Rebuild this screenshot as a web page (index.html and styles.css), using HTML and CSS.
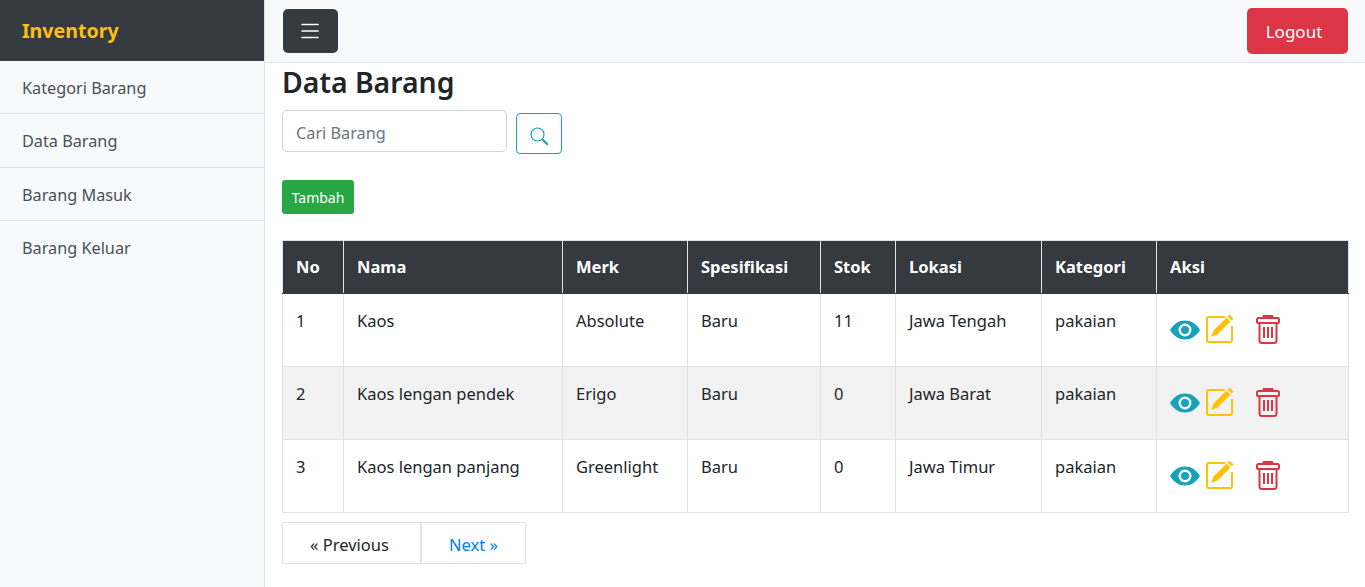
FILE: index.html
```html
<!DOCTYPE html>
<html lang="id">
<head>
  <meta charset="UTF-8" />
  <meta name="viewport" content="width=device-width, initial-scale=1.0" />
  <title>Inventory</title>
  <link rel="stylesheet" href="styles.css">
</head>
<body>
  <svg class="icon-defs" width="0" height="0">
    <symbol id="i-eye" viewBox="0 0 30 20">
      <path fill-rule="evenodd" d="M0 10C4 3.500 9 .5 15 .5S26 3.500 30 10c-4 6.500-9 9.500-15 9.500S4 16.500 0 10zm15-6.500a6.500 6.500 0 1 0 0 13 6.500 6.500 0 0 0 0-13zm0 2.500a4 4 0 1 1 0 8 4 4 0 0 1 0-8z"/>
    </symbol>
    <symbol id="i-edit" viewBox="0 0 28 29">
      <path fill="none" stroke="currentColor" stroke-width="2" d="M19 3H3a2 2 0 0 0-2 2v21a2 2 0 0 0 2 2h21a2 2 0 0 0 2-2V12"/>
      <path d="M23.500 .5l4 4-2 2-4-4zM20.500 3.500l4 4L11.500 20.500l-6.500 2.500 2.500-6.500z"/>
    </symbol>
    <symbol id="i-trash" viewBox="0 0 24 29">
      <path d="M8.500 0h7a1.500 1.500 0 0 1 1.500 2.500H7A1.500 1.500 0 0 1 8.500 0z"/>
      <path fill="none" stroke="currentColor" stroke-width="2" d="M2.500 3h19a1.500 1.500 0 0 1 1.500 1.500V7a1 1 0 0 1-1 1H2a1 1 0 0 1-1-1V4.500A1.500 1.500 0 0 1 2.500 3zM3.500 8v17.500A2.500 2.500 0 0 0 6 28h12a2.500 2.500 0 0 0 2.500-2.500V8"/>
      <path fill="none" stroke="currentColor" stroke-width="2" d="M8 12v11M12 12v11M16 12v11"/>
    </symbol>
  </svg>

  <div class="wrapper">
    <nav class="sidebar">
      <div class="brand">Inventory</div>
      <a class="side-link" href="#">Kategori Barang</a>
      <a class="side-link" href="#">Data Barang</a>
      <a class="side-link" href="#">Barang Masuk</a>
      <a class="side-link last" href="#">Barang Keluar</a>
    </nav>

    <div class="content">
      <header class="topbar">
        <button class="btn-toggle" aria-label="Menu">
          <svg width="18" height="16" viewBox="0 0 18 16"><path d="M1 1.500h16M1 8h16M1 14.500h16" stroke="#fff" stroke-width="1.600" stroke-linecap="round"/></svg>
        </button>
        <button class="btn-logout">Logout</button>
      </header>

      <main class="main">
        <h1>Data Barang</h1>
        <form class="search-form">
          <input class="search-input" type="text" placeholder="Cari Barang" />
          <button type="button" class="btn-search" aria-label="Cari">
            <svg width="20" height="20" viewBox="0 0 20 20"><circle cx="8.500" cy="8.500" r="6.500" fill="none" stroke="#17a2b8" stroke-width="1.200"/><path d="M13.300 13.300l5 5" stroke="#17a2b8" stroke-width="2" stroke-linecap="round"/></svg>
          </button>
        </form>
        <button class="btn-add">Tambah</button>

        <table class="data-table">
          <colgroup>
            <col class="c-no"><col class="c-nama"><col class="c-merk"><col class="c-spek">
            <col class="c-stok"><col class="c-lokasi"><col class="c-kat"><col>
          </colgroup>
          <thead>
            <tr><th>No</th><th>Nama</th><th>Merk</th><th>Spesifikasi</th><th>Stok</th><th>Lokasi</th><th>Kategori</th><th>Aksi</th></tr>
          </thead>
          <tbody>
            <tr>
              <td>1</td><td>Kaos</td><td>Absolute</td><td>Baru</td><td>11</td><td>Jawa Tengah</td><td>pakaian</td>
              <td><div class="aksi">
                <svg class="ic-eye"><use href="#i-eye"/></svg>
                <svg class="ic-edit"><use href="#i-edit"/></svg>
                <svg class="ic-trash"><use href="#i-trash"/></svg>
              </div></td>
            </tr>
            <tr>
              <td>2</td><td>Kaos lengan pendek</td><td>Erigo</td><td>Baru</td><td>0</td><td>Jawa Barat</td><td>pakaian</td>
              <td><div class="aksi">
                <svg class="ic-eye"><use href="#i-eye"/></svg>
                <svg class="ic-edit"><use href="#i-edit"/></svg>
                <svg class="ic-trash"><use href="#i-trash"/></svg>
              </div></td>
            </tr>
            <tr>
              <td>3</td><td>Kaos lengan panjang</td><td>Greenlight</td><td>Baru</td><td>0</td><td>Jawa Timur</td><td>pakaian</td>
              <td><div class="aksi">
                <svg class="ic-eye"><use href="#i-eye"/></svg>
                <svg class="ic-edit"><use href="#i-edit"/></svg>
                <svg class="ic-trash"><use href="#i-trash"/></svg>
              </div></td>
            </tr>
          </tbody>
        </table>

        <div class="pager">
          <a class="page-prev" href="#">« Previous</a>
          <a class="page-next" href="#">Next »</a>
        </div>
      </main>
    </div>
  </div>
</body>
</html>
```

FILE: styles.css
```css
html, body {
  height: 100%;
}
body {
  margin: 0;
  font-family: "Noto Sans", "Open Sans", sans-serif;
  font-size: 16.500px;
  color: #212529;
  background: #fff;
  overflow: hidden;
}
.icon-defs {
  display: none;
}
.wrapper {
  display: flex;
  height: 100%;
}

/* sidebar */
.sidebar {
  width: 264px;
  flex-shrink: 0;
  background: #f8f9fa;
  border-right: 1px solid #dee2e6;
}
.brand {
  height: 61px;
  padding-left: 22px;
  background: #343a40;
  color: #ffc107;
  font-size: 19.600px;
  font-weight: 700;
  line-height: 61px;
}
.side-link {
  display: block;
  height: 52.400px;
  padding-left: 22px;
  border-bottom: 1px solid #dee2e6;
  color: #495057;
  font-size: 16.250px;
  line-height: 54px;
  text-decoration: none;
}
.side-link.last {
  border-bottom: none;
}

/* top bar */
.content {
  flex: 1;
  min-width: 0;
}
.topbar {
  display: flex;
  justify-content: space-between;
  align-items: center;
  height: 62px;
  padding: 0 17px 0 18px;
  background: #f8f9fa;
  border-bottom: 1px solid #dee2e6;
}
.btn-toggle {
  display: flex;
  align-items: center;
  justify-content: center;
  width: 55px;
  height: 44px;
  padding: 0 1px 0 0;
  border: none;
  border-radius: 5px;
  background: #343a40;
}
.btn-logout {
  width: 101px;
  height: 46px;
  padding: 0 7px 0 0;
  border: none;
  border-radius: 5px;
  background: #dc3545;
  color: #fff;
  font: inherit;
  font-size: 17px;
}

/* main */
.main {
  padding: 0 16px 0 17px;
}
h1 {
  margin: 0;
  height: 47px;
  font-size: 28.400px;
  font-weight: 600;
  line-height: 38px;
}
.search-form {
  display: flex;
  align-items: flex-start;
  gap: 9px;
}
.search-input {
  box-sizing: border-box;
  width: 225px;
  height: 42px;
  padding: 4px 13px 0;
  border: 1px solid #ced4da;
  border-radius: 5px;
  color: #495057;
  font: inherit;
  font-size: 16.250px;
}
.search-input::placeholder {
  color: #6c757d;
}
.btn-search {
  display: flex;
  align-items: center;
  justify-content: center;
  width: 46px;
  height: 41px;
  margin-top: 3px;
  padding: 4px 1px 0 0;
  border: 1px solid #17a2b8;
  border-radius: 4px;
  background: #fff;
}
.btn-add {
  display: block;
  width: 72px;
  height: 34px;
  margin: 26px 0 26px;
  padding: 0;
  border: none;
  border-radius: 3px;
  background: #28a745;
  color: #fff;
  font-family: inherit;
  font-size: 14px;
}

/* table */
.data-table {
  width: 100%;
  table-layout: fixed;
  border-collapse: collapse;
}
.c-no { width: 61px; }
.c-nama { width: 219px; }
.c-merk { width: 125px; }
.c-spek { width: 133px; }
.c-stok { width: 75px; }
.c-lokasi { width: 146px; }
.c-kat { width: 115px; }
.data-table th,
.data-table td {
  padding: 13px;
  border: 1px solid #dee2e6;
  text-align: left;
  vertical-align: top;
}
.data-table th {
  height: 26px;
  background: #343a40;
  border-color: #dee2e6 #dee2e6 #343a40;
  color: #fff;
  font-weight: 700;
  line-height: 26px;
}
.data-table td {
  height: 46px;
  line-height: 27px;
}
.data-table tbody tr:nth-child(even) {
  background: #f2f2f2;
}
.aksi {
  display: flex;
  align-items: center;
  height: 46px;
  padding-bottom: 1px;
  box-sizing: border-box;
}
.ic-eye {
  width: 30px;
  height: 20px;
  color: #17a2b8;
  fill: currentColor;
}
.ic-edit {
  width: 28px;
  height: 29px;
  margin: 0 0 2px 6px;
  color: #ffc107;
  fill: currentColor;
}
.ic-trash {
  width: 24px;
  height: 29px;
  margin-left: 22px;
  color: #dc3545;
  fill: currentColor;
}

/* pager */
.pager {
  display: flex;
  margin-top: 9px;
}
.pager a {
  box-sizing: border-box;
  height: 42px;
  border: 1px solid #dee2e6;
  line-height: 43px;
  text-align: center;
  text-decoration: none;
}
.page-prev {
  width: 139px;
  padding-right: 4px;
  color: #212529;
}
.page-next {
  width: 105px;
  color: #007bff;
}
```
